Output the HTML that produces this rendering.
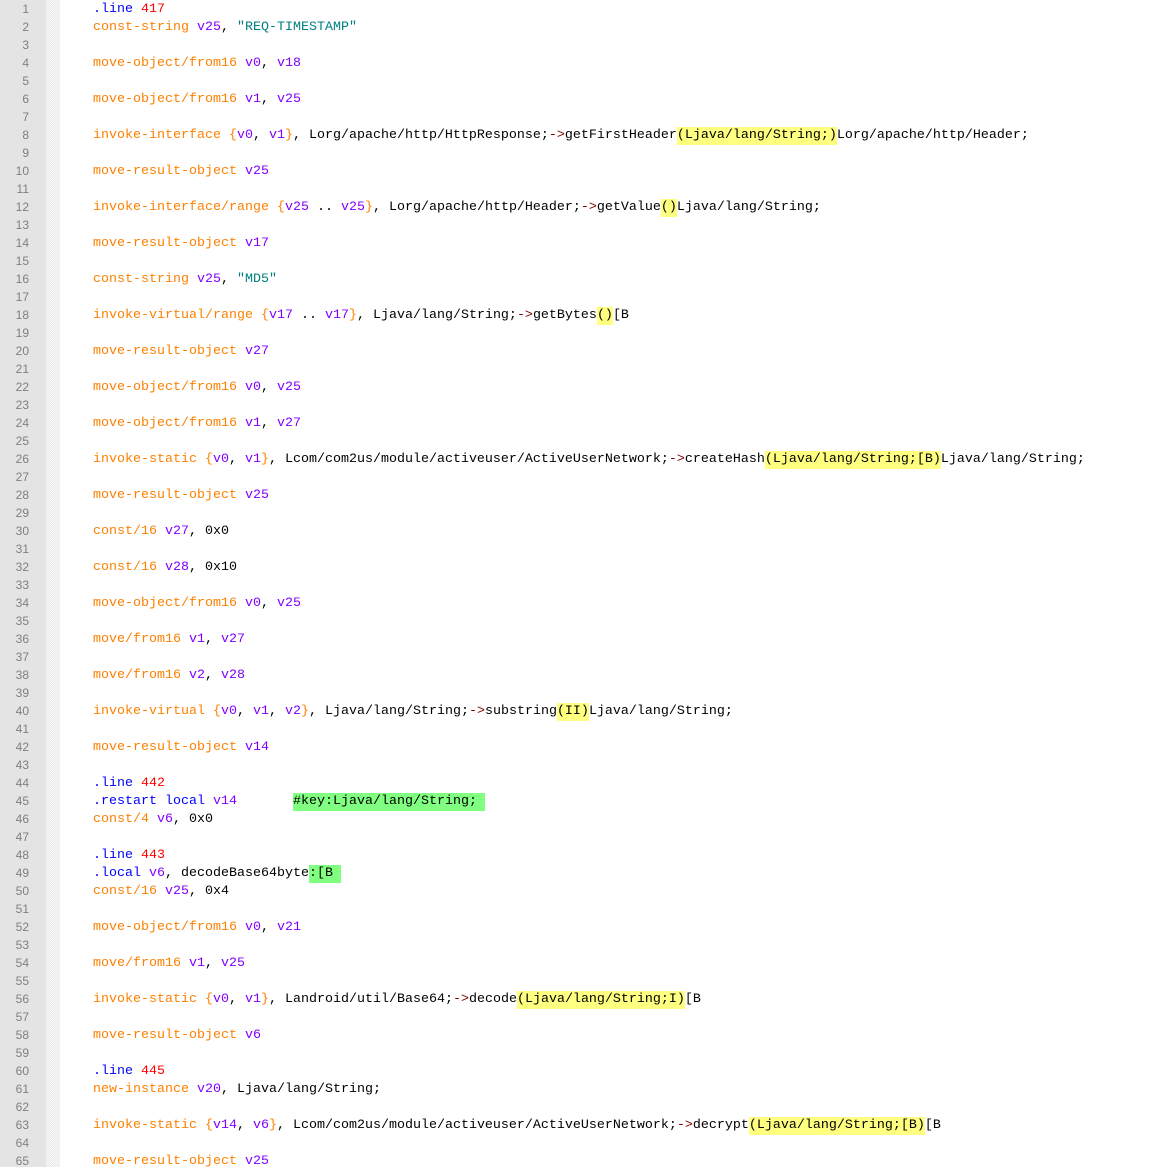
<!DOCTYPE html>
<html><head><meta charset="utf-8"><style>
html,body{margin:0;padding:0;background:#fff;width:1176px;height:1167px;overflow:hidden}
.g{position:absolute;left:0;top:0;width:46px;height:1167px;background:#e4e4e4}
.h{position:absolute;left:46px;top:0;width:14px;height:1167px;background:#f2f2f2;background-image:repeating-conic-gradient(#e8e8e8 0 25%,#fafafa 0 50%);background-size:2px 2px}
.n{position:absolute;left:0;top:0;width:29px;text-align:right;font:12px/18px "Liberation Sans",sans-serif;color:#808080}
.c{position:absolute;left:93px;top:1px;font:13.33px/18px "Liberation Mono",monospace;color:#000}
.c div{white-space:pre}
.o{color:#ff8000}.p{color:#8000ff}.b{color:#0000ff}.r{color:#ff0000}.t{color:#008080}.d{color:#800000}
.y{background:#ffff80}.gr{background:#80ff80}
.y,.gr{display:inline-block;height:18px;vertical-align:top}
.c div,.n div{height:18px}
</style></head><body>
<div class="g"></div><div class="h"></div>
<div class="n">
<div>1</div><div>2</div><div>3</div><div>4</div><div>5</div><div>6</div><div>7</div><div>8</div><div>9</div><div>10</div><div>11</div><div>12</div><div>13</div><div>14</div><div>15</div><div>16</div><div>17</div><div>18</div><div>19</div><div>20</div><div>21</div><div>22</div><div>23</div><div>24</div><div>25</div><div>26</div><div>27</div><div>28</div><div>29</div><div>30</div><div>31</div><div>32</div><div>33</div><div>34</div><div>35</div><div>36</div><div>37</div><div>38</div><div>39</div><div>40</div><div>41</div><div>42</div><div>43</div><div>44</div><div>45</div><div>46</div><div>47</div><div>48</div><div>49</div><div>50</div><div>51</div><div>52</div><div>53</div><div>54</div><div>55</div><div>56</div><div>57</div><div>58</div><div>59</div><div>60</div><div>61</div><div>62</div><div>63</div><div>64</div><div>65</div>
</div>
<div class="c">
<div><span class="b">.line</span> <span class="r">417</span></div>
<div><span class="o">const-string</span> <span class="p">v25</span>, <span class="t">"REQ-TIMESTAMP"</span></div>
<div></div>
<div><span class="o">move-object/from16</span> <span class="p">v0</span>, <span class="p">v18</span></div>
<div></div>
<div><span class="o">move-object/from16</span> <span class="p">v1</span>, <span class="p">v25</span></div>
<div></div>
<div><span class="o">invoke-interface {</span><span class="p">v0</span>, <span class="p">v1</span><span class="o">}</span>, Lorg/apache/http/HttpResponse;<span class="d">-&gt;</span>getFirstHeader<span class="y">(Ljava/lang/String;)</span>Lorg/apache/http/Header;</div>
<div></div>
<div><span class="o">move-result-object</span> <span class="p">v25</span></div>
<div></div>
<div><span class="o">invoke-interface/range {</span><span class="p">v25</span> .. <span class="p">v25</span><span class="o">}</span>, Lorg/apache/http/Header;<span class="d">-&gt;</span>getValue<span class="y">()</span>Ljava/lang/String;</div>
<div></div>
<div><span class="o">move-result-object</span> <span class="p">v17</span></div>
<div></div>
<div><span class="o">const-string</span> <span class="p">v25</span>, <span class="t">"MD5"</span></div>
<div></div>
<div><span class="o">invoke-virtual/range {</span><span class="p">v17</span> .. <span class="p">v17</span><span class="o">}</span>, Ljava/lang/String;<span class="d">-&gt;</span>getBytes<span class="y">()</span>[B</div>
<div></div>
<div><span class="o">move-result-object</span> <span class="p">v27</span></div>
<div></div>
<div><span class="o">move-object/from16</span> <span class="p">v0</span>, <span class="p">v25</span></div>
<div></div>
<div><span class="o">move-object/from16</span> <span class="p">v1</span>, <span class="p">v27</span></div>
<div></div>
<div><span class="o">invoke-static {</span><span class="p">v0</span>, <span class="p">v1</span><span class="o">}</span>, Lcom/com2us/module/activeuser/ActiveUserNetwork;<span class="d">-&gt;</span>createHash<span class="y">(Ljava/lang/String;[B)</span>Ljava/lang/String;</div>
<div></div>
<div><span class="o">move-result-object</span> <span class="p">v25</span></div>
<div></div>
<div><span class="o">const/16</span> <span class="p">v27</span>, 0x0</div>
<div></div>
<div><span class="o">const/16</span> <span class="p">v28</span>, 0x10</div>
<div></div>
<div><span class="o">move-object/from16</span> <span class="p">v0</span>, <span class="p">v25</span></div>
<div></div>
<div><span class="o">move/from16</span> <span class="p">v1</span>, <span class="p">v27</span></div>
<div></div>
<div><span class="o">move/from16</span> <span class="p">v2</span>, <span class="p">v28</span></div>
<div></div>
<div><span class="o">invoke-virtual {</span><span class="p">v0</span>, <span class="p">v1</span>, <span class="p">v2</span><span class="o">}</span>, Ljava/lang/String;<span class="d">-&gt;</span>substring<span class="y">(II)</span>Ljava/lang/String;</div>
<div></div>
<div><span class="o">move-result-object</span> <span class="p">v14</span></div>
<div></div>
<div><span class="b">.line</span> <span class="r">442</span></div>
<div><span class="b">.restart local</span> <span class="p">v14</span>       <span class="gr">#key:Ljava/lang/String; </span></div>
<div><span class="o">const/4</span> <span class="p">v6</span>, 0x0</div>
<div></div>
<div><span class="b">.line</span> <span class="r">443</span></div>
<div><span class="b">.local</span> <span class="p">v6</span>, decodeBase64byte<span class="gr">:[B </span></div>
<div><span class="o">const/16</span> <span class="p">v25</span>, 0x4</div>
<div></div>
<div><span class="o">move-object/from16</span> <span class="p">v0</span>, <span class="p">v21</span></div>
<div></div>
<div><span class="o">move/from16</span> <span class="p">v1</span>, <span class="p">v25</span></div>
<div></div>
<div><span class="o">invoke-static {</span><span class="p">v0</span>, <span class="p">v1</span><span class="o">}</span>, Landroid/util/Base64;<span class="d">-&gt;</span>decode<span class="y">(Ljava/lang/String;I)</span>[B</div>
<div></div>
<div><span class="o">move-result-object</span> <span class="p">v6</span></div>
<div></div>
<div><span class="b">.line</span> <span class="r">445</span></div>
<div><span class="o">new-instance</span> <span class="p">v20</span>, Ljava/lang/String;</div>
<div></div>
<div><span class="o">invoke-static {</span><span class="p">v14</span>, <span class="p">v6</span><span class="o">}</span>, Lcom/com2us/module/activeuser/ActiveUserNetwork;<span class="d">-&gt;</span>decrypt<span class="y">(Ljava/lang/String;[B)</span>[B</div>
<div></div>
<div><span class="o">move-result-object</span> <span class="p">v25</span></div>
</div>
</body></html>
